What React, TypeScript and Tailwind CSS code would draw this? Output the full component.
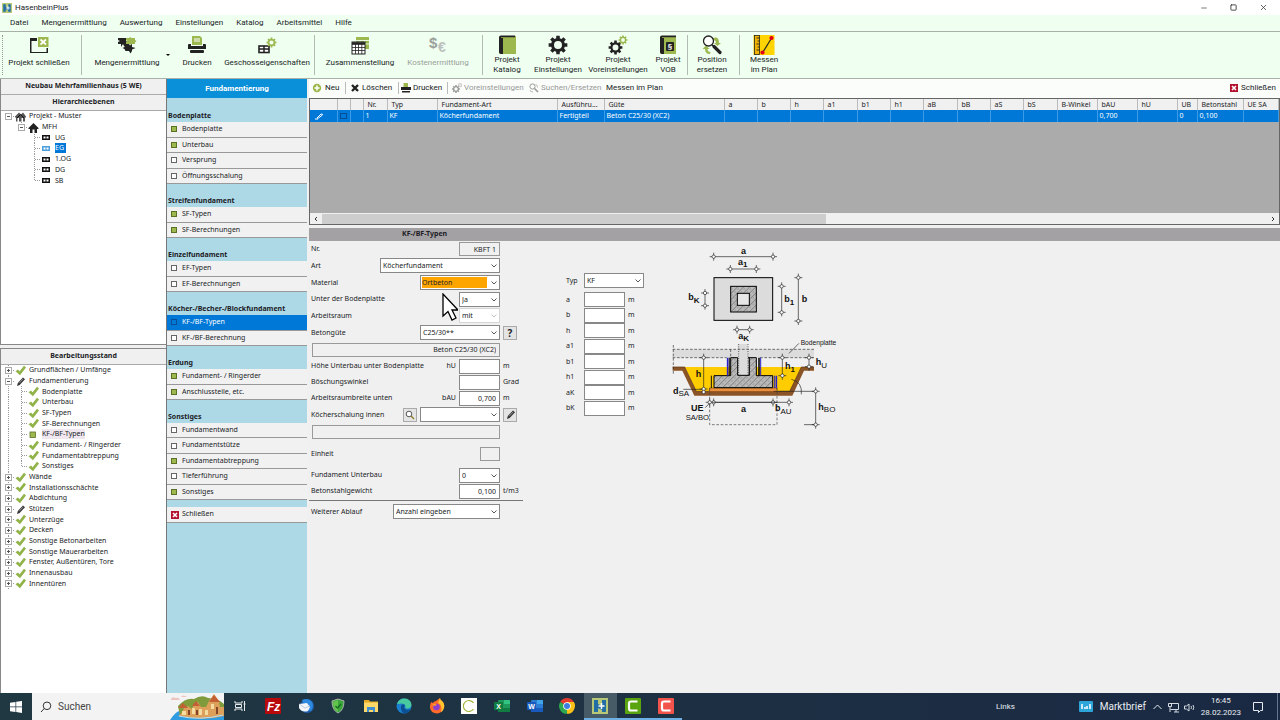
import type { ReactNode } from 'react'
import { Minus, Square, X } from 'lucide-react'

const GREEN = '#9db84f'
const DARK = '#222222'

/* ---------- toolbar icons ---------- */

const gearPath = (cx: number, cy: number, r: number) => {
  const points: string[] = []
  for (let i = 0; i < 8; i++) {
    const a = (i * Math.PI) / 4
    const steps: Array<[number, number]> = [
      [-0.26, 0.74],
      [-0.18, 1],
      [0.18, 1],
      [0.26, 0.74],
    ]
    steps.forEach(([offset, k]) => {
      points.push(
        `${(cx + Math.sin(a + offset) * r * k).toFixed(2)} ${(cy - Math.cos(a + offset) * r * k).toFixed(2)}`
      )
    })
  }
  const h = r * 0.42
  return `M${points.join('L')}ZM${cx - h} ${cy}a${h} ${h} 0 1 0 ${h * 2} 0a${h} ${h} 0 1 0 ${-h * 2} 0Z`
}

const Gear = ({ cx, cy, r, fill }: { cx: number; cy: number; r: number; fill: string }) => (
  <path d={gearPath(cx, cy, r)} fill={fill} fillRule="evenodd" />
)

const Icon = ({ children }: { children: ReactNode }) => (
  <svg viewBox="0 0 22 20" className="h-5 w-[22px]" aria-hidden="true">
    {children}
  </svg>
)

const closeProjectIcon = (
  <Icon>
    <path d="M2 3h7v3H3.500v11h15V13H20v5H2Z" fill={DARK} />
    <rect x="10" y="2" width="10.500" height="10" fill={GREEN} />
    <path d="M12.500 4.500l5.500 5M18 4.500l-5.500 5" stroke="#fff" strokeWidth="1.700" />
  </Icon>
)

const puzzleIcon = (
  <Icon>
    <path d="M2 3h8v3l2 1-2 2v2H8L7 9 5 12V9H2V7l2-1-2-1Z" fill={DARK} />
    <path d="M10 3h3l1-1 1.500 1H19v2l1.500 1L19 7.500V9h-3l-1 1-1-1h-4V7l1.500-1L10 5Z" fill={GREEN} />
    <path d="M11 9h2l1 1.500L16 9v3l3.500 1L16 14.500V16l-1.500 2.500L13 16H9.500l-1-2-2-1 2-1V9h2Z" fill={DARK} />
  </Icon>
)

const printerIcon = (
  <Icon>
    <path d="M6 1h8l2 2v7H6Z" fill={GREEN} />
    <path d="M8 4h6M8 6h6" stroke="#fff" />
    <path d="M2 10q0-1 1-1h2v2h12V9h2q1 0 1 1v4H2Z" fill={DARK} />
    <rect x="4" y="15" width="14" height="3" rx="1" fill={DARK} />
  </Icon>
)

const storeyIcon = (
  <Icon>
    <rect x="3" y="11" width="10" height="6.500" fill="#fff" stroke={DARK} strokeWidth="1.600" />
    <path d="M8 11v7M3 14h10" stroke={DARK} strokeWidth="1.500" />
    <Gear cx={15.5} cy={7.5} r={5} fill={GREEN} />
  </Icon>
)

const sheetsIcon = (
  <Icon>
    <path d="M7 2h13v12H7Z" fill={GREEN} />
    <path d="M7 5.500h13M7 9h13M11 5v9M15.500 5v9" stroke="#effff0" strokeWidth="0.900" />
    <rect x="3" y="7" width="13" height="12" fill="#fff" stroke={DARK} />
    <path d="M3 8.500h13" stroke={DARK} strokeWidth="2.600" />
    <path d="M3 12.500h13M3 15.500h13M6.500 8v11M9.500 8v11M12.800 8v11" stroke={DARK} strokeWidth="0.800" />
  </Icon>
)

const costIcon = (
  <Icon>
    <text x="2" y="13" fontSize="15" fontWeight="700" fill="#9b9f9b" fontFamily="Liberation Sans">$</text>
    <text x="11" y="17" fontSize="14" fontWeight="700" fill="#bcc0bc" fontFamily="Liberation Sans">€</text>
  </Icon>
)

const catalogIcon = (
  <Icon>
    <path d="M3 2.500Q3 1 5 1h15v18H5q-2 0-2-2Z" fill={GREEN} />
    <path d="M3 2.500Q3 .5 5 .5h14v1.800H5V3h2v16H5q-2 0-2-2Z" fill={DARK} />
  </Icon>
)

const settingsIcon = (
  <Icon>
    <Gear cx={11} cy={10} r={9.5} fill={DARK} />
  </Icon>
)

const presetsIcon = (
  <Icon>
    <Gear cx={8.5} cy={12.5} r={7} fill={DARK} />
    <Gear cx={16} cy={5} r={4.5} fill={GREEN} />
  </Icon>
)

const vobIcon = (
  <Icon>
    <path d="M3 2.500Q3 1 5 1h14v18H5q-2 0-2-2Z" fill={GREEN} />
    <path d="M3 2.500Q3 .5 5 .5h14v1.800H5V3h2v16H5q-2 0-2-2Z" fill={DARK} />
    <rect x="9" y="7" width="8" height="9" rx="1" fill={DARK} />
    <text x="13" y="14" textAnchor="middle" fontSize="8" fontWeight="700" fill="#fff" fontFamily="Liberation Sans">§</text>
  </Icon>
)

const replaceIcon = (
  <Icon>
    <path d="M12 3q6-2 6 5h2l-3.500 3L13 8h2q0-3-3-3Z" fill={GREEN} />
    <path d="M9 19q-5 0-5-5H1.500l3.500-3.500L8.500 14H6.500q0 3 3 3Z" fill={GREEN} />
    <circle cx="7.500" cy="6" r="5" fill="#fff" stroke={DARK} strokeWidth="1.300" />
    <path d="M11 10l2 1.500" stroke={DARK} strokeWidth="1.500" />
    <path d="M13 11.500l6 6" stroke={DARK} strokeWidth="3.200" strokeLinecap="round" />
  </Icon>
)

const measureIcon = (
  <Icon>
    <rect x="0.500" y="0" width="21" height="20" fill="#ffd400" />
    <rect x="1.500" y="0.500" width="5" height="19" fill="#f2b400" stroke={DARK} strokeWidth="0.800" />
    <path d="M3.500 3h3M4.500 6h2M3.500 9h3M4.500 12h2M3.500 15h3" stroke={DARK} strokeWidth="0.900" />
    <path d="M10 17l8-13" stroke={DARK} strokeWidth="1.200" />
    <circle cx="9.500" cy="17.500" r="2.100" fill="#e3001b" />
    <circle cx="18.500" cy="3" r="2.100" fill="#e3001b" />
  </Icon>
)

interface ToolItem {
  label?: string[]
  icon?: ReactNode
  className: string
}

const tools: ToolItem[] = [
  { label: ['Projekt schließen'], icon: closeProjectIcon, className: 'w-[68px]' },
  { className: 'ml-2' },
  { label: ['Mengenermittlung'], icon: puzzleIcon, className: 'ml-2 w-[74px]' },
  { label: ['Drucken'], icon: printerIcon, className: 'ml-4 w-[34px]' },
  { label: ['Geschosseigenschaften'], icon: storeyIcon, className: 'ml-2 w-[90px]' },
  { className: 'ml-[2px]' },
  { label: ['Zusammenstellung'], icon: sheetsIcon, className: 'ml-2 w-[74px]' },
  { label: ['Kostenermittlung'], icon: costIcon, className: 'ml-2 w-[66px] text-[#9a9e9a]' },
  { className: 'ml-[11px]' },
  { label: ['Projekt', 'Katalog'], icon: catalogIcon, className: 'ml-2 w-[32px]' },
  { label: ['Projekt', 'Einstellungen'], icon: settingsIcon, className: 'ml-2 w-[54px]' },
  { label: ['Projekt', 'Voreinstellungen'], icon: presetsIcon, className: 'w-[66px]' },
  { label: ['Projekt', 'VOB'], icon: vobIcon, className: 'w-[34px]' },
  { className: 'ml-[2px]' },
  { label: ['Position', 'ersetzen'], icon: replaceIcon, className: 'ml-2 w-[32px]' },
  { className: 'ml-[11px]' },
  { label: ['Messen', 'im Plan'], icon: measureIcon, className: 'ml-2 w-[32px]' },
]

const menus = [
  'Datei',
  'Mengenermittlung',
  'Auswertung',
  'Einstellungen',
  'Katalog',
  'Arbeitsmittel',
  'Hilfe',
]

const LogoMark = ({ className }: { className: string }) => (
  <svg viewBox="0 0 16 16" className={className} aria-hidden="true">
    <rect width="16" height="16" fill="#b7c878" />
    <path d="M2 2h4v4l4 2V2h4v12h-4v-2L6 10v4H2Z" fill="#236fa5" />
    <path d="M9.500 5v6M6.500 8h6" stroke="#fff" strokeWidth="1.500" />
  </svg>
)

const TitleBar = () => (
  <header className="font-[Roboto,sans-serif]">
    <div className="flex h-[15px] items-center bg-white pl-[2px]">
      <LogoMark className="h-[10px] w-[10px]" />
      <h1 className="ml-[3px] text-[8px]">HasenbeinPlus</h1>
      <div className="ml-auto flex items-center gap-[22px] pr-[12px] text-[#333]">
        <button type="button" aria-label="Minimieren"><Minus size={8} strokeWidth={2} /></button>
        <button type="button" aria-label="Verkleinern"><Square size={7} strokeWidth={3} /></button>
        <button type="button" aria-label="Fenster schließen"><X size={9} strokeWidth={2} /></button>
      </div>
    </div>
    <nav className="flex h-[16px] items-center gap-[13px] bg-[#effff0] pl-[10px] text-[8px]">
      {menus.map(menu => (
        <button key={menu} type="button">{menu}</button>
      ))}
    </nav>
  </header>
)

const Toolbar = () => (
  <div className="flex h-[48px] items-stretch border-y border-[#a8b0a8] bg-[#effff0] py-[3px] font-[Roboto,sans-serif] text-[8px]">
    <div className="mr-[2px] ml-[2px] w-px border-l border-dotted border-[#999]" />
    {tools.map((tool, i) =>
      tool.label ? (
        <div key={tool.label.join()} className={`relative flex shrink-0 justify-center ${tool.className}`}>
          <button type="button" className="flex flex-col items-center whitespace-nowrap">
            {tool.icon}
            {tool.label.map(line => (
              <span key={line} className={tool.label?.length === 2 ? 'leading-[10px]' : 'mt-[1px] leading-[14px]'}>
                {line}
              </span>
            ))}
          </button>
          {tool.label[0] === 'Mengenermittlung' && (
            <span className="absolute top-[19px] -right-[6px] border-x-2 border-t-2 border-x-transparent border-t-black" />
          )}
        </div>
      ) : (
        <div key={i} className={`w-px shrink-0 bg-[#b3bab3] ${tool.className}`} />
      )
    )}
  </div>
)

/* ---------- trees ---------- */

type TreeIcon = 'check' | 'pencil' | 'box' | 'houses' | 'house' | 'storey' | 'storeyActive'

interface TreeRow {
  label: string
  level: number
  icon: TreeIcon
  expander?: '+' | '-'
  selected?: 'strong' | 'soft'
}

const projectRows: TreeRow[] = [
  { label: 'Projekt - Muster', level: 0, icon: 'houses', expander: '-' },
  { label: 'MFH', level: 1, icon: 'house', expander: '-' },
  { label: 'UG', level: 2, icon: 'storey' },
  { label: 'EG', level: 2, icon: 'storeyActive', selected: 'strong' },
  { label: '1.OG', level: 2, icon: 'storey' },
  { label: 'DG', level: 2, icon: 'storey' },
  { label: 'SB', level: 2, icon: 'storey' },
]

const statusRows: TreeRow[] = [
  { label: 'Grundflächen / Umfänge', level: 0, icon: 'check', expander: '+' },
  { label: 'Fundamentierung', level: 0, icon: 'pencil', expander: '-' },
  { label: 'Bodenplatte', level: 1, icon: 'check' },
  { label: 'Unterbau', level: 1, icon: 'check' },
  { label: 'SF-Typen', level: 1, icon: 'check' },
  { label: 'SF-Berechnungen', level: 1, icon: 'check' },
  { label: 'KF-/BF-Typen', level: 1, icon: 'box', selected: 'soft' },
  { label: 'Fundament- / Ringerder', level: 1, icon: 'check' },
  { label: 'Fundamentabtreppung', level: 1, icon: 'check' },
  { label: 'Sonstiges', level: 1, icon: 'check' },
  { label: 'Wände', level: 0, icon: 'check', expander: '+' },
  { label: 'Installationsschächte', level: 0, icon: 'check', expander: '+' },
  { label: 'Abdichtung', level: 0, icon: 'check', expander: '+' },
  { label: 'Stützen', level: 0, icon: 'pencil', expander: '+' },
  { label: 'Unterzüge', level: 0, icon: 'check', expander: '+' },
  { label: 'Decken', level: 0, icon: 'check', expander: '+' },
  { label: 'Sonstige Betonarbeiten', level: 0, icon: 'check', expander: '+' },
  { label: 'Sonstige Mauerarbeiten', level: 0, icon: 'check', expander: '+' },
  { label: 'Fenster, Außentüren, Tore', level: 0, icon: 'check', expander: '+' },
  { label: 'Innenausbau', level: 0, icon: 'check', expander: '+' },
  { label: 'Innentüren', level: 0, icon: 'check', expander: '+' },
]

const Pencil = () => (
  <>
    <path d="M2 10l.8-3L8 1.500l2 1.700L4.600 9Z" fill="#333" />
    <path d="M4.200 7.200l4-4.300" stroke="#aaa" strokeWidth="0.800" />
  </>
)

const treeIcons: Record<TreeIcon, ReactNode> = {
  check: <path d="M.5 6.200l2.500-1.700 1.600 1.700L9 .800l2 1.600-6 7.800Z" fill="#92b34a" />,
  pencil: <Pencil />,
  box: <rect x="2" y="3" width="5.500" height="5.500" fill={GREEN} stroke="#5c7026" strokeWidth="0.800" />,
  houses: (
    <>
      <path d="M0 5.500L4 1.500l2 2 2-2 3 4v1h-1v4H8V7H6.500v3.500H4V7H2.500v3.500H1v-4H0Z" fill="#555" />
      <path d="M2 7l3.500-3.500L9 7" stroke="#111" fill="none" />
    </>
  ),
  house: <path d="M.5 6L5.500 1l5 5v1H9v4H6.500V7.500h-2V11H2V7H.5Z" fill={DARK} />,
  storey: (
    <>
      <rect x="1" y="3" width="8" height="5" fill="#111" />
      <path d="M2.500 4.500h2v2h-2ZM5.500 4.500h2v2h-2Z" fill="#fff" />
    </>
  ),
  storeyActive: (
    <>
      <rect x="1" y="3" width="8" height="5" fill="#4c9fdc" />
      <path d="M2.500 4.500h2v2h-2ZM5.500 4.500h2v2h-2Z" fill="#fff" />
    </>
  ),
}

const TreeItem = ({ row, rail, last }: { row: TreeRow; rail: boolean; last: boolean }) => {
  const x = 2 + row.level * 13
  return (
    <li className="flex min-h-0 items-center" role="treeitem" aria-selected={row.selected !== undefined}>
      <svg
        viewBox={`0 0 ${x + 13} 11`}
        className={['w-[15px]', 'w-[28px]', 'w-[41px]'][row.level] + ' h-[11px] shrink-0'}
        aria-hidden="true"
      >
        <g stroke="#999" strokeDasharray="1 1">
          {rail && row.level > 0 && <path d="M8.500 0v11" />}
          {(rail || row.level > 0) && <path d={`M${x + 6.5} 0v${last ? 6 : 11}`} />}
          <path d={`M${x + 7} 5.500h6`} />
        </g>
        {row.expander && (
          <>
            <rect x={x + 3.5} y="2.500" width="6" height="6" fill="#fff" stroke="#aaa" />
            <path d={`M${x + 5} 5.500h3${row.expander === '+' ? `M${x + 6.5} 4v3` : ''}`} stroke="#555" />
          </>
        )}
      </svg>
      <svg viewBox="0 0 13 11" className="h-[11px] w-[13px] shrink-0" aria-hidden="true">
        {treeIcons[row.icon]}
      </svg>
      <span
        className={`ml-px leading-[10px] whitespace-nowrap ${
          row.selected === 'strong' ? 'bg-[#0078d7] pr-[2px] text-white' : ''
        } ${row.selected === 'soft' ? 'bg-[#efe6ef]' : ''}`}
      >
        {row.label}
      </span>
    </li>
  )
}

const Tree = ({ rows, rail, label, className }: { rows: TreeRow[]; rail: boolean; label: string; className: string }) => (
  <ul role="tree" aria-label={label} className={`grid auto-rows-fr text-[7px] ${className}`}>
    {rows.map((row, i) => (
      <TreeItem key={row.label} row={row} rail={rail} last={row.level > 0 && (rows[i + 1]?.level ?? 0) !== row.level} />
    ))}
  </ul>
)

const PaneTitle = ({ children }: { children: ReactNode }) => (
  <h2 className="flex h-4 shrink-0 items-center justify-center border-b border-[#aaa] bg-[#f0f0f0] text-[7px] font-bold">
    {children}
  </h2>
)

const ProjectPane = () => (
  <aside className="flex w-[167px] shrink-0 flex-col border-r border-[#777] bg-[#f0f0f0]">
    <section className="flex h-[266px] flex-col border-b border-l border-[#888] bg-white">
      <PaneTitle>Neubau Mehrfamilienhaus (5 WE)</PaneTitle>
      <PaneTitle>Hierarchieebenen</PaneTitle>
      <Tree rows={projectRows} rail={false} label="Hierarchieebenen" className="-ml-px h-[75px]" />
    </section>
    <section className="mt-[3px] flex flex-1 flex-col border-t border-l border-[#888] bg-white">
      <PaneTitle>Bearbeitungsstand</PaneTitle>
      <Tree rows={statusRows} rail label="Bearbeitungsstand" className="-ml-px h-[224px]" />
    </section>
  </aside>
)

/* ---------- section navigation ---------- */

interface NavEntry {
  label: string
  done?: boolean
  active?: boolean
}

const navGroups: Array<{ title: string; className: string; entries: NavEntry[] }> = [
  {
    title: 'Bodenplatte',
    className: 'h-[62px]',
    entries: [
      { label: 'Bodenplatte', done: true },
      { label: 'Unterbau', done: true },
      { label: 'Versprung' },
      { label: 'Öffnungsschalung' },
    ],
  },
  {
    title: 'Streifenfundament',
    className: 'h-[31px]',
    entries: [
      { label: 'SF-Typen', done: true },
      { label: 'SF-Berechnungen', done: true },
    ],
  },
  {
    title: 'Einzelfundament',
    className: 'h-[31px]',
    entries: [{ label: 'EF-Typen' }, { label: 'EF-Berechnungen' }],
  },
  {
    title: 'Köcher-/Becher-/Blockfundament',
    className: 'h-[31px]',
    entries: [{ label: 'KF-/BF-Typen', active: true }, { label: 'KF-/BF-Berechnung' }],
  },
  {
    title: 'Erdung',
    className: 'h-[31px]',
    entries: [
      { label: 'Fundament- / Ringerder', done: true },
      { label: 'Anschlussteile, etc.', done: true },
    ],
  },
  {
    title: 'Sonstiges',
    className: 'h-[77px]',
    entries: [
      { label: 'Fundamentwand' },
      { label: 'Fundamentstütze' },
      { label: 'Fundamentabtreppung', done: true },
      { label: 'Tieferführung' },
      { label: 'Sonstiges', done: true },
    ],
  },
]

const CloseMark = () => (
  <svg viewBox="0 0 8 8" className="h-2 w-2 shrink-0" aria-hidden="true">
    <rect width="8" height="8" fill="#b3122f" />
    <path d="M2 2l4 4M6 2L2 6" stroke="#fff" strokeWidth="1.600" />
  </svg>
)

const SectionNav = () => (
  <nav className="w-[140px] shrink-0 bg-[#add8e6] text-[7px]" aria-label="Fundamentierung">
    <h2 className="mb-px flex h-[19px] items-center justify-center bg-[#0a90d8] font-[Roboto,sans-serif] text-[8px] font-bold text-white">
      Fundamentierung
    </h2>
    {navGroups.map(group => (
      <section key={group.title}>
        <h3 className="flex h-[23px] items-end pb-px pl-px font-bold whitespace-nowrap">{group.title}</h3>
        <div className={`grid auto-rows-fr ${group.className}`}>
          {group.entries.map(entry => (
            <button
              key={entry.label}
              type="button"
              className={`flex w-full items-center gap-[5px] border-b border-[#999] pl-1 ${
                entry.active ? 'bg-[#0078d7] text-white' : 'bg-[#f1f1f1]'
              }`}
            >
              <span
                className={`h-[6px] w-[6px] border ${entry.done ? 'border-[#5c7026] bg-[#9db84f]' : ''} ${
                  entry.active ? 'border-[#064f96]' : ''
                } ${!entry.done && !entry.active ? 'border-[#666] bg-white' : ''}`}
              />
              {entry.label}
            </button>
          ))}
        </div>
      </section>
    ))}
    <button type="button" className="mt-[7px] flex h-4 w-full items-center gap-[3px] border-b border-[#999] bg-[#f1f1f1] pl-1">
      <CloseMark />
      Schließen
    </button>
  </nav>
)

/* ---------- record list ---------- */

const MiniIcon = ({ children }: { children: ReactNode }) => (
  <svg viewBox="0 0 10 10" className="h-[10px] w-[10px] shrink-0" aria-hidden="true">
    {children}
  </svg>
)

const RecordBar = () => (
  <div className="flex h-[19px] items-center bg-[#fafdfa] pr-1 pb-px pl-[3px] font-[Roboto,sans-serif] text-[8px] whitespace-nowrap">
    <button type="button" className="flex w-8 items-center gap-[3px]">
      <MiniIcon>
        <circle cx="5" cy="5" r="4.200" fill={GREEN} />
        <path d="M5 2.500v5M2.500 5h5" stroke="#fff" strokeWidth="1.500" />
      </MiniIcon>
      Neu
    </button>
    <span className="mr-1 ml-px h-3 w-px bg-[#bbb]" />
    <button type="button" className="flex w-12 items-center gap-[2px]">
      <MiniIcon>
        <path d="M2 2l6 6M8 2L2 8" stroke={DARK} strokeWidth="2.400" />
      </MiniIcon>
      Löschen
    </button>
    <span className="mr-[2px] h-3 w-px bg-[#bbb]" />
    <button type="button" className="flex w-[46px] items-center gap-[2px]">
      <MiniIcon>
        <path d="M2.500 0H7v4H2.500Z" fill={GREEN} />
        <path d="M0 4h10v3H0ZM1 8h8v1.500H1Z" fill={DARK} />
      </MiniIcon>
      Drucken
    </button>
    <span className="mr-1 h-3 w-px bg-[#bbb]" />
    <button type="button" className="flex w-[74px] items-center gap-[2px] text-[#999]" disabled>
      <MiniIcon>
        <Gear cx={4} cy={6} r={4} fill="#999" />
        <Gear cx={8} cy={2.2} r={2.2} fill="#bbb" />
      </MiniIcon>
      Voreinstellungen
    </button>
    <button type="button" className="ml-[3px] flex w-[74px] items-center gap-[2px] text-[#999]" disabled>
      <MiniIcon>
        <circle cx="3.500" cy="3.500" r="2.600" fill="none" stroke="#999" />
        <path d="M5.500 5.500l3.500 3.500" stroke="#999" strokeWidth="1.600" />
        <path d="M6.500 1.500q2 0 2 3M1 7q0 2 3 2" fill="none" stroke="#bbb" />
      </MiniIcon>
      Suchen/Ersetzen
    </button>
    <button type="button" className="ml-[3px]">Messen im Plan</button>
    <button type="button" className="ml-auto flex items-center gap-[3px]">
      <CloseMark />
      Schließen
    </button>
  </div>
)

const columns: Array<{ title: string; width: number; value?: string }> = [
  { title: '', width: 27 },
  { title: '', width: 13 },
  { title: '', width: 13 },
  { title: 'Nr.', width: 24, value: '1' },
  { title: 'Typ', width: 50, value: 'KF' },
  { title: 'Fundament-Art', width: 120, value: 'Köcherfundament' },
  { title: 'Ausführu...', width: 47, value: 'Fertigteil' },
  { title: 'Güte', width: 120, value: 'Beton C25/30 (XC2)' },
  { title: 'a', width: 33 },
  { title: 'b', width: 33 },
  { title: 'h', width: 33 },
  { title: 'a1', width: 34 },
  { title: 'b1', width: 33 },
  { title: 'h1', width: 33 },
  { title: 'aB', width: 34 },
  { title: 'bB', width: 33 },
  { title: 'aS', width: 33 },
  { title: 'bS', width: 34 },
  { title: 'B-Winkel', width: 40 },
  { title: 'bAU', width: 40, value: '0,700' },
  { title: 'hU', width: 40 },
  { title: 'UB', width: 20, value: '0' },
  { title: 'Betonstahl', width: 46, value: '0,100' },
  { title: 'UE SA', width: 36 },
]

const RecordTable = () => (
  <div className="flex h-[127px] flex-col border border-[#666] bg-[#ababab]">
    <table className="w-full table-fixed border-collapse text-[7px] leading-[10px]">
      <colgroup>
        {columns.map((column, i) => (
          <col key={i} style={{ width: i === columns.length - 1 ? undefined : column.width }} />
        ))}
      </colgroup>
      <thead>
        <tr className="h-[11px] bg-[#f0f0f0]">
          {columns.map((column, i) => (
            <th key={i} className="border-r border-[#bbb] p-0 pl-1 text-left font-normal whitespace-nowrap">
              {column.title}
            </th>
          ))}
        </tr>
      </thead>
      <tbody>
        <tr className="h-3 bg-[#0078d7] text-white">
          {columns.map((column, i) => (
            <td key={i} className="border-r border-[#3c9be6] p-0 pl-[2px] whitespace-nowrap">
              {i === 0 && (
                <svg viewBox="0 0 10 8" className="ml-[2px] h-2 w-[10px]" aria-hidden="true">
                  <path d="M1 7h3M3 6l4-4q1.500-.5 1.500 1l-4 3Z" fill="none" stroke="#fff" />
                </svg>
              )}
              {i === 1 && <span className="block h-[6px] w-[7px] border border-[#064f96]" />}
              {column.value}
            </td>
          ))}
        </tr>
      </tbody>
    </table>
    <div className="mt-auto flex h-[11px] items-center bg-[#f0f0f0]">
      <span className="flex w-3 justify-center">
        <svg viewBox="0 0 6 6" className="h-[6px] w-[6px]"><path d="M4 1L2 3l2 2" fill="none" stroke="#333" /></svg>
      </span>
      <span className="h-[10px] w-[52%] bg-[#cdcdcd]" />
      <span className="ml-auto flex w-3 justify-center">
        <svg viewBox="0 0 6 6" className="h-[6px] w-[6px]"><path d="M2 1l2 2-2 2" fill="none" stroke="#333" /></svg>
      </span>
    </div>
  </div>
)

/* ---------- form ---------- */

const SelectBox = ({
  id,
  value,
  className,
  disabled,
  highlight,
}: {
  id: string
  value: string
  className: string
  disabled?: boolean
  highlight?: boolean
}) => (
  <span className={`relative block h-[15px] shrink-0 border bg-white ${disabled ? 'border-[#d5d5d5]' : 'border-[#888]'} ${className}`}>
    <select
      id={id}
      defaultValue={value}
      disabled={disabled}
      className={`block h-[13px] w-full appearance-none leading-[11px] outline-none ${
        highlight ? 'border border-r-[12px] border-white bg-[#ffa500]' : 'px-[2px]'
      }`}
    >
      <option value={value}>{value}</option>
    </select>
    <svg viewBox="0 0 6 6" className="pointer-events-none absolute top-[4px] right-[2px] h-[6px] w-[6px]" aria-hidden="true">
      <path d="M.5 1.500L3 4l2.500-2.500" fill="none" stroke={disabled ? '#bbb' : '#444'} strokeWidth="0.900" />
    </svg>
  </span>
)

const FormRow = ({
  label,
  htmlFor,
  prefix,
  unit,
  className,
  children,
}: {
  label: string
  htmlFor: string
  prefix?: string
  unit?: ReactNode
  className: string
  children: ReactNode
}) => (
  <div className={`grid grid-cols-[191px_1fr] items-center ${className}`}>
    <div className="flex items-center pl-[2px]">
      <label htmlFor={htmlFor} className="mr-auto whitespace-nowrap">{label}</label>
      {prefix && <span className="mr-[3px]">{prefix}</span>}
      {children}
    </div>
    <div className="pl-[3px] whitespace-nowrap">{unit}</div>
  </div>
)

const fieldClass = 'h-[15px] shrink-0 border border-[#888] bg-white px-[3px] text-right outline-none'
const plainClass = 'h-[14px] shrink-0 border border-[#999] bg-[#f0f0f0] px-[3px] text-right outline-none'
const squareClass = 'flex h-[14px] w-[14px] items-center justify-center border border-[#aaa] bg-[#e4e4e4]'

const TypeForm = () => (
  <form className="relative w-[214px] shrink-0" onSubmit={event => event.preventDefault()}>
    <FormRow label="Nr." htmlFor="nr" className="h-4">
      <input id="nr" defaultValue="KBFT 1" readOnly className={`w-[41px] ${plainClass}`} />
    </FormRow>
    <FormRow label="Art" htmlFor="art" className="h-[17px]">
      <SelectBox id="art" value="Köcherfundament" className="w-[120px]" />
    </FormRow>
    <FormRow label="Material" htmlFor="material" className="h-[17px]">
      <SelectBox id="material" value="Ortbeton" className="w-[80px]" highlight />
    </FormRow>
    <FormRow label="Unter der Bodenplatte" htmlFor="unter" className="h-4">
      <SelectBox id="unter" value="Ja" className="w-[41px]" />
    </FormRow>
    <FormRow label="Arbeitsraum" htmlFor="arbeitsraum" className="h-[17px]">
      <SelectBox id="arbeitsraum" value="mit" className="w-[41px]" disabled />
    </FormRow>
    <FormRow
      label="Betongüte"
      htmlFor="guete"
      className="h-[17px]"
      unit={<button type="button" className={`${squareClass} text-[10px] font-bold`}>?</button>}
    >
      <SelectBox id="guete" value="C25/30**" className="w-[80px]" />
    </FormRow>
    <div className="flex h-[17px] items-center pl-[3px]">
      <input aria-label="Beton" defaultValue="Beton C25/30 (XC2)" readOnly className={`w-[188px] ${plainClass}`} />
    </div>
    <FormRow label="Höhe Unterbau unter Bodenplatte" htmlFor="hu" prefix="hU" unit="m" className="h-4">
      <input id="hu" className={`w-[41px] ${fieldClass}`} />
    </FormRow>
    <FormRow label="Böschungswinkel" htmlFor="winkel" unit="Grad" className="h-4">
      <input id="winkel" className={`w-[41px] ${fieldClass}`} />
    </FormRow>
    <FormRow label="Arbeitsraumbreite unten" htmlFor="bau" prefix="bAU" unit="m" className="h-4">
      <input id="bau" defaultValue="0,700" className={`w-[41px] ${fieldClass}`} />
    </FormRow>
    <FormRow
      label="Köcherschalung innen"
      htmlFor="schalung"
      className="h-[17px]"
      unit={
        <button type="button" aria-label="Bearbeiten" className={squareClass}>
          <svg viewBox="0 0 11 11" className="h-[11px] w-[11px]"><Pencil /></svg>
        </button>
      }
    >
      <button type="button" aria-label="Suchen" className={`mr-[3px] ${squareClass}`}>
        <svg viewBox="0 0 10 10" className="h-[10px] w-[10px]">
          <circle cx="4" cy="4" r="2.800" fill="#fff" stroke="#444" strokeWidth="0.900" />
          <path d="M6 6l3 3" stroke="#8a7a20" strokeWidth="1.200" />
        </svg>
      </button>
      <SelectBox id="schalung" value="" className="w-[80px]" />
    </FormRow>
    <div className="flex h-[18px] items-center pl-[3px]">
      <input aria-label="Schalung" readOnly className={`w-[188px] ${plainClass}`} />
    </div>
    <FormRow label="Einheit" htmlFor="einheit" className="h-[25px]">
      <input id="einheit" readOnly className={`w-[20px] ${plainClass}`} />
    </FormRow>
    <FormRow label="Fundament Unterbau" htmlFor="fu" className="mt-px h-4">
      <SelectBox id="fu" value="0" className="w-[41px]" />
    </FormRow>
    <FormRow label="Betonstahlgewicht" htmlFor="stahl" unit="t/m3" className="h-4">
      <input id="stahl" defaultValue="0,100" className={`w-[41px] ${fieldClass}`} />
    </FormRow>
    <hr className="mt-px border-[#777]" />
    <FormRow label="Weiterer Ablauf" htmlFor="ablauf" className="mt-[2px] h-[17px]">
      <SelectBox id="ablauf" value="Anzahl eingeben" className="w-[107px]" />
    </FormRow>
    <svg viewBox="0 0 16 28" className="pointer-events-none absolute top-[52px] left-[133px] h-7 w-4" aria-hidden="true">
      <path d="M1 1v22l5-4.500 4 8.500 4-2-4-8h6Z" fill="#fff" stroke="#000" strokeWidth="1.300" />
    </svg>
  </form>
)

const dimensions = ['a', 'b', 'h', 'a1', 'b1', 'h1', 'aK', 'bK']

const DimensionForm = () => (
  <div className="ml-[43px] w-[78px] shrink-0 pt-8">
    <div className="flex items-center">
      <label htmlFor="typ" className="w-[18px]">Typ</label>
      <SelectBox id="typ" value="KF" className="w-[60px]" />
    </div>
    <div className="mt-1 grid h-[124px] auto-rows-fr">
      {dimensions.map(name => (
        <div key={name} className="flex items-center">
          <label htmlFor={`dim-${name}`} className="w-[18px]">{name}</label>
          <input id={`dim-${name}`} className={`w-[41px] ${fieldClass}`} />
          <span className="ml-[3px]">m</span>
        </div>
      ))}
    </div>
  </div>
)

/* ---------- foundation drawing ---------- */

const Dim = ({ x1, y1, x2, y2 }: { x1: number; y1: number; x2: number; y2: number }) => {
  const horizontal = y1 === y2
  const a = horizontal ? 12 : 0
  const b = horizontal ? 0 : 12
  return (
    <g stroke="#222" strokeWidth="2">
      <path d={`M${x1 - a} ${y1 - b}L${x2 + a} ${y2 + b}`} />
      {[[x1, y1], [x2, y2]].map(([x, y]) => (
        <g key={`${x}-${y}`}>
          <path d={`M${x - b} ${y - a}L${x + b} ${y + a}`} />
          <circle cx={x} cy={y} r="5" fill="#fff" />
        </g>
      ))}
    </g>
  )
}

const Tag = ({ x, y, main, sub, light }: { x: number; y: number; main: string; sub?: string; light?: boolean }) => (
  <text x={x} y={y} fontSize="27" fontWeight="700" fill="#111">
    {main}
    {sub && <tspan dy="7" fontSize="24" fontWeight={light ? 400 : 700}>{sub}</tspan>}
  </text>
)

const FoundationDrawing = () => (
  <svg viewBox="0 3 570 570" className="ml-4 h-[190px] w-[190px] shrink-0" fontFamily="Liberation Sans, sans-serif" role="img" aria-label="Köcherfundament">
    <defs>
      <pattern id="hatch" width="13" height="13" patternUnits="userSpaceOnUse" patternTransform="rotate(45)">
        <rect width="13" height="13" fill="#bcbcbc" />
        <path d="M4 0v13" stroke="#555" strokeWidth="1.500" />
        <path d="M10 0v13" stroke="#777" strokeWidth="1.500" strokeDasharray="7 6" />
      </pattern>
    </defs>

    <rect x="162" y="113" width="176" height="128" fill="#dcdcdc" stroke="#000" strokeWidth="3" />
    <rect x="212" y="139" width="77" height="77" fill="url(#hatch)" stroke="#000" strokeWidth="3" />
    <rect x="232" y="160" width="36" height="36" fill="#e6e6e6" stroke="#000" strokeWidth="3" />
    <Dim x1={161} y1={50} x2={339} y2={50} />
    <Dim x1={211} y1={87} x2={289} y2={87} />
    <Dim x1={135} y1={159} x2={135} y2={197} />
    <Dim x1={365} y1={139} x2={365} y2={217} />
    <Dim x1={415} y1={113} x2={415} y2={243} />
    <Dim x1={231} y1={269} x2={269} y2={269} />
    <Tag x={243} y={42} main="a" />
    <Tag x={234} y={75} main="a" sub="1" />
    <Tag x={85} y={181} main="b" sub="K" />
    <Tag x={373} y={187} main="b" sub="1" />
    <Tag x={425} y={187} main="b" />
    <Tag x={235} y={297} main="a" sub="K" />

    <rect x="38" y="328" width="424" height="25" fill="#dcdcdc" />
    <path d="M74 381h352l-36 73H109Z" fill="#ffcc00" />
    <path d="M38 381h36l35 73h280l35-73h38v11h-30l-35 75H103L67 392H38Z" fill="#8b5427" />
    <path d="M38 381h36l35 73h280l35-73h38" fill="none" stroke="#5d3210" strokeWidth="2" />
    <rect x="149" y="444" width="202" height="11" fill="#e9903e" stroke="#8b4a15" strokeWidth="2" />
    <path d="M212 353h77v54h49v36H162v-36h50Z" fill="url(#hatch)" stroke="#000" strokeWidth="3" />
    <path d="M233 312h31v94h-31Z" fill="#dcdcdc" />
    <path d="M236 312v94M264 312v94" stroke="#222" strokeWidth="2" strokeDasharray="3 4" />
    <path d="M233 353v53h35v-53" fill="none" stroke="#000" strokeWidth="3" />
    <path d="M38 328h424M212 328v25M38 353h162M300 353h162M40 315v90" fill="none" stroke="#333" strokeWidth="2" strokeDasharray="8 5" />
    <path d="M203 353v54M349 407v37" stroke="#2a22c8" strokeWidth="5" />
    <path d="M208 353v54M154 407v37" stroke="#111" strokeWidth="3" />
    <path d="M297 353v54" stroke="#111" strokeWidth="5" />
    <path d="M302 353v54M343 407v37" stroke="#2a22c8" strokeWidth="3" />
    <path d="M341 454h120M432 554h36M70 448h62" stroke="#222" strokeWidth="2" />
    <path d="M387 340l30-30M394 418q34 8 30 45" fill="none" stroke="#222" strokeWidth="2" />
    <path d="M149 444v110h202V444" fill="none" stroke="#444" strokeWidth="2" strokeDasharray="8 5" />
    <Dim x1={131} y1={353} x2={131} y2={447} />
    <circle cx="131" cy="456" r="5" fill="#fff" stroke="#222" strokeWidth="2" />
    <Dim x1={367} y1={353} x2={367} y2={407} />
    <Dim x1={447} y1={353} x2={447} y2={380} />
    <Dim x1={467} y1={454} x2={467} y2={554} />
    <Dim x1={161} y1={487} x2={339} y2={487} />
    <Dim x1={149} y1={487} x2={387} y2={487} />
    <path d="M136 503l13-14" stroke="#222" strokeWidth="2" />
    <Tag x={107} y={411} main="h" />
    <Tag x={375} y={388} main="h" sub="1" />
    <Tag x={467} y={376} main="h" sub="U" light />
    <Tag x={39} y={461} main="d" sub="SA" light />
    <Tag x={475} y={510} main="h" sub="BO" light />
    <Tag x={93} y={512} main="UE" />
    <Tag x={243} y={515} main="a" />
    <Tag x={345} y={514} main="b" sub="AU" light />
    <text x="77" y="539" fontSize="23" fill="#111">SA/BO</text>
    <text x="422" y="316" fontSize="20" fill="#111">Bodenplatte</text>
  </svg>
)

/* ---------- taskbar ---------- */

const AppIcon = ({ children }: { children: ReactNode }) => (
  <svg viewBox="0 0 16 16" className="h-4 w-4" aria-hidden="true">
    {children}
  </svg>
)

const OfficeIcon = ({ letter, base, light, dark }: { letter: string; base: string; light: string; dark: string }) => (
  <AppIcon>
    <rect x="4" y="2" width="12" height="12" rx="1" fill={base} />
    <path d="M10 2h5q1 0 1 1v3h-6Z" fill={light} />
    <path d="M4 10h12v3q0 1-1 1H4Z" fill={dark} />
    <rect x="0" y="4" width="9" height="8" rx="1" fill={dark} />
    <text x="4.500" y="10.500" textAnchor="middle" fontSize="7" fontWeight="700" fill="#fff" fontFamily="Liberation Sans">
      {letter}
    </text>
  </AppIcon>
)

const CamtasiaIcon = ({ color }: { color: string }) => (
  <AppIcon>
    <rect width="16" height="16" rx="1" fill={color} />
    <path d="M12.500 3.500H6q-2 0-2 2v5q0 2 2 2h6.500" fill="none" stroke="#fff" strokeWidth="2.200" />
  </AppIcon>
)

const apps: Array<{ name: string; icon: ReactNode; state?: 'active' | 'open' }> = [
  {
    name: 'Aktive Anwendungen',
    icon: (
      <AppIcon>
        <path d="M3 3v2h7V3M3 13v-2h7v2M3.500 6.500h6v3h-6ZM12.500 3v10M11.500 6h2" fill="none" stroke="#e5eaec" />
      </AppIcon>
    ),
  },
  {
    name: 'FileZilla',
    icon: (
      <AppIcon>
        <rect width="16" height="16" rx="1" fill="#b8090b" />
        <text x="2" y="12.500" fontSize="12" fontWeight="700" fontStyle="italic" fill="#fff" fontFamily="Liberation Sans">Fz</text>
      </AppIcon>
    ),
  },
  {
    name: 'Thunderbird',
    icon: (
      <AppIcon>
        <circle cx="9" cy="8" r="7" fill="#1f5fae" />
        <path d="M4 2q6-3 10 2 2 5-1 9l-5-2Z" fill="#2e8ae0" />
        <path d="M1 6l8-1 3 4-2 4q-6 2-9-3Z" fill="#f1f5fa" />
        <path d="M1 6l6 4 5-2" fill="none" stroke="#aebfd2" strokeWidth="0.800" />
      </AppIcon>
    ),
  },
  {
    name: 'Schutz',
    icon: (
      <AppIcon>
        <path d="M8 1l6 2q0 9-6 12Q2 12 2 3Z" fill="#3aa53a" stroke="#a9b3a9" />
        <path d="M8 2v12q-5-3-5-10Z" fill="#63c34d" />
        <path d="M5.500 8l2 2L11 6" fill="none" stroke="#156a20" strokeWidth="1.200" />
      </AppIcon>
    ),
  },
  {
    name: 'Explorer',
    icon: (
      <AppIcon>
        <path d="M1 2h5l1 1.500h8V7H1Z" fill="#e5a823" />
        <rect x="1" y="4.500" width="14" height="9.500" fill="#ffd869" />
        <path d="M4 9h8v5h-2v-2H6v2H4Z" fill="#3f8fd0" />
      </AppIcon>
    ),
  },
  {
    name: 'Edge',
    icon: (
      <AppIcon>
        <circle cx="8" cy="8" r="7.500" fill="#1b7fd0" />
        <path d="M1 6q2-6 8-5.500Q15 1 15.500 7q-1 4-5 3.500-2-.5-1-2Q9 4 1 6Z" fill="#48c9a0" />
        <path d="M5 8q1-3 4-1-2 3 1 4.500 3 1 5-1Q12 16 8 15.500 4 13 5 8Z" fill="#0c4f93" />
      </AppIcon>
    ),
  },
  {
    name: 'Firefox',
    icon: (
      <AppIcon>
        <path d="M2 4l2 1q1-2 3-2l4-3q0 2 2 3 3 3 2 7-2 5-7 5.500Q2 15 1 10q0-4 1-6Z" fill="#ff6a2a" />
        <path d="M11 0q0 2 2 3 3 3 2 7-1 3-3 4 2-7-3-9Z" fill="#ffc531" />
        <circle cx="7.500" cy="9" r="3.300" fill="#8a3fd0" />
        <path d="M3 6q3-1 5 1l-3 1Z" fill="#ff9c2a" />
      </AppIcon>
    ),
  },
  {
    name: 'California',
    icon: (
      <AppIcon>
        <rect width="16" height="16" fill="#fff" />
        <path d="M12.500 5A5.500 5.500 0 1 0 12.500 11" fill="none" stroke="#a2b83f" strokeWidth="1.200" />
      </AppIcon>
    ),
  },
  { name: 'Excel', icon: <OfficeIcon letter="X" base="#1f9a5b" light="#33c481" dark="#107c41" /> },
  { name: 'Word', icon: <OfficeIcon letter="W" base="#2b7cd3" light="#41a5ee" dark="#185abd" /> },
  {
    name: 'Chrome',
    icon: (
      <AppIcon>
        <path d="M8 8L1.200 4A7.800 7.800 0 0 1 14.800 4Z" fill="#e33b2e" />
        <path d="M8 8l6.800-4A7.800 7.800 0 0 1 8 15.800Z" fill="#fbc116" />
        <path d="M8 8v7.800A7.800 7.800 0 0 1 1.200 4Z" fill="#2da94f" />
        <path d="M8 4h6.800q1 2 1 4H8Z" fill="#fbc116" />
        <circle cx="8" cy="8" r="3.800" fill="#fff" />
        <circle cx="8" cy="8" r="3" fill="#3e7de0" />
      </AppIcon>
    ),
  },
  { name: 'HasenbeinPlus', icon: <LogoMark className="h-4 w-4" />, state: 'active' },
  { name: 'Camtasia', icon: <CamtasiaIcon color="#5aa50f" />, state: 'open' },
  { name: 'Camtasia Recorder', icon: <CamtasiaIcon color="#f2544c" />, state: 'open' },
]

const SearchArt = () => (
  <svg viewBox="0 0 54 26" className="ml-auto h-[26px] w-[54px] shrink-0" aria-hidden="true">
    <path d="M0 26q6-9 10-9h44v9Z" fill="#2f9be0" />
    <path d="M8 12q8-9 16-7 8-5 14-1 10 0 16 6v12H10Z" fill="#7f9b3c" />
    <path d="M1 5q2-3 4-1 4-1 5 2H1ZM11 3q2-3 6 0Z" fill="#eec4c0" />
    <path d="M8 22q4-2 6-8l4-2 4 3 2-5 4-2 3 5h5l3-6 5-7 5 7 1 6h4v9q-16 4-32 2Z" fill="#dda05a" />
    <path d="M8 14l5-5 5 5ZM39 8l5-7 6 7ZM22 12l4-5 4 5Z" fill="#c35f35" />
    <path d="M12 17h4v4h-4ZM22 14h3v6h-3ZM29 15h3v6h-3ZM41 10h3v5h-3ZM35 16h3v5h-3Z" fill="#f6dba0" />
    <path d="M18 16h2v5h-2ZM26 16h2v5h-2ZM46 13h2v7h-2Z" fill="#84462b" />
    <path d="M9 22q20 5 44-1" fill="none" stroke="#b3dff7" />
  </svg>
)

const Taskbar = () => (
  <footer className="flex h-[27px] shrink-0 items-stretch bg-linear-to-r from-[#203842] to-[#1a2943] text-white">
    <button type="button" aria-label="Start" className="flex w-8 items-center justify-center">
      <svg viewBox="0 0 12 12" className="h-3 w-3">
        <path d="M0 1.700l5.500-.8v4.700H0ZM6.200.8L12 0v5.600H6.200ZM0 6.300h5.500V11L0 10.300ZM6.200 6.300H12V12l-5.800-.9Z" fill="#fff" />
      </svg>
    </button>
    <label className="flex w-48 items-center bg-[#f3f3f3] pl-2 text-[#333]">
      <svg viewBox="0 0 12 12" className="h-3 w-3 shrink-0" aria-hidden="true">
        <circle cx="7" cy="4.800" r="3.800" fill="none" stroke="#333" />
        <path d="M4.300 7.500L1 11" stroke="#333" />
      </svg>
      <input
        aria-label="Suchen"
        placeholder="Suchen"
        className="ml-[6px] w-[60px] font-[Roboto,sans-serif] text-[10px] outline-none placeholder:text-[#444]"
      />
      <SearchArt />
    </label>
    <div className="grid w-[458px] grid-cols-14">
      {apps.map(app => (
        <button
          key={app.name}
          type="button"
          aria-label={app.name}
          className={`flex items-center justify-center border-b-2 ${
            app.state ? 'border-[#6fb0e4]' : 'border-transparent'
          } ${app.state === 'active' ? 'bg-[#475b67]' : ''}`}
        >
          {app.icon}
        </button>
      ))}
    </div>
    <div className="ml-auto flex items-center font-[Roboto,sans-serif] text-[#e8edf2]">
      <span className="mr-16 text-[8px]">Links</span>
      <svg viewBox="0 0 14 11" className="h-[11px] w-[14px]" aria-hidden="true">
        <rect width="14" height="11" rx="1" fill="#2ea5d8" />
        <path d="M3 3v5M6 6v2M8 5v3M11 3v5" stroke="#fff" strokeWidth="1.500" />
      </svg>
      <span className="ml-[7px] w-[46px] text-[10px]">Marktbrief</span>
      <svg viewBox="0 0 46 12" className="ml-[6px] h-3 w-[46px]" fill="none" stroke="#e8edf2" aria-hidden="true">
        <path d="M1.500 8L5.500 4l4 4" />
        <path d="M18.500 2.500h8v6h-8M22 11h5M24 9v2M16.500 2.500h3v3h-3ZM18 6v5" strokeWidth="0.900" />
        <path d="M32.500 5h2l2.500-2v7l-2.500-2h-2ZM39 5q1 1.500 0 3M41 4q1.500 2.500 0 5" strokeWidth="0.900" />
      </svg>
      <time className="ml-[3px] text-center text-[8px] leading-[12px]" dateTime="2023-02-28T16:45">
        16:45<br />28.02.2023
      </time>
      <button type="button" aria-label="Benachrichtigungen" className="ml-[10px]">
        <svg viewBox="0 0 14 14" className="h-[14px] w-[14px]" fill="none" stroke="#e8edf2">
          <path d="M2.500 2.500h9v8h-2l-2 2v-2h-5Z" />
        </svg>
      </button>
      <span className="ml-3 h-full w-[3px] border-l border-[#66748a]" />
    </div>
  </footer>
)

const App = () => (
  <div className="flex min-h-screen flex-col overflow-hidden bg-[#f0f0f0] font-['Noto_Sans','Open_Sans',sans-serif] text-[#201c26]">
    <TitleBar />
    <Toolbar />
    <div className="flex flex-1">
      <ProjectPane />
      <SectionNav />
      <main className="ml-[2px] min-w-0 flex-1">
        <RecordBar />
        <RecordTable />
        <h2 className="mt-[3px] flex h-[13px] items-center bg-[#a3a1a4] pl-[93px] text-[7px] font-bold">KF-/BF-Typen</h2>
        <div className="flex items-start text-[7px] leading-[10px]">
          <TypeForm />
          <DimensionForm />
          <FoundationDrawing />
        </div>
      </main>
    </div>
    <Taskbar />
  </div>
)

export default App
